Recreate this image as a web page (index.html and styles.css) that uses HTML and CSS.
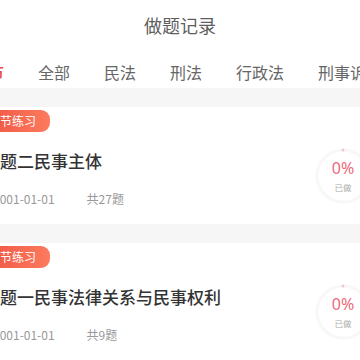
FILE: index.html
```html
<!DOCTYPE html>
<html lang="zh-CN">
<head>
<meta charset="utf-8">
<title>做题记录</title>
<link rel="stylesheet" href="styles.css">
</head>
<body>
<header class="topbar">做题记录</header>
<nav class="tabs">
  <span class="tab active">章节</span>
  <span class="tab">全部</span>
  <span class="tab">民法</span>
  <span class="tab">刑法</span>
  <span class="tab">行政法</span>
  <span class="tab">刑事诉讼法</span>
</nav>
<main class="list">
  <section class="card">
    <div class="info">
      <span class="badge">章节练习</span>
      <h2 class="title">专题二民事主体</h2>
      <p class="meta"><span>2001-01-01</span><span class="count">共27题</span></p>
    </div>
    <div class="progress">
      <svg class="ring" width="56" height="56" viewBox="0 0 56 56">
        <circle cx="28" cy="28" r="26" fill="none" stroke="#f8f8f8" stroke-width="3"/>
        <circle cx="28" cy="2" r="1.5" fill="#f7c6cc"/>
      </svg>
      <div class="pct"><span class="num">0%</span><span class="lbl">已做</span></div>
    </div>
  </section>
  <section class="card">
    <div class="info">
      <span class="badge">章节练习</span>
      <h2 class="title">专题一民事法律关系与民事权利</h2>
      <p class="meta"><span>2001-01-01</span><span class="count">共9题</span></p>
    </div>
    <div class="progress">
      <svg class="ring" width="56" height="56" viewBox="0 0 56 56">
        <circle cx="28" cy="28" r="26" fill="none" stroke="#f8f8f8" stroke-width="3"/>
        <circle cx="28" cy="2" r="1.5" fill="#f7c6cc"/>
      </svg>
      <div class="pct"><span class="num">0%</span><span class="lbl">已做</span></div>
    </div>
  </section>
</main>
</body>
</html>
```
FILE: styles.css
```css
* { box-sizing: border-box; }
html, body {
  margin: 0;
  padding: 0;
  width: 360px;
  height: 360px;
  overflow: hidden;
  background: #fff;
  font-family: "Noto Sans CJK SC", "Noto Sans", sans-serif;
}
.topbar {
  height: 50px;
  display: flex;
  align-items: center;
  justify-content: center;
  font-size: 18px;
  color: #5e5e5e;
}
.tabs {
  height: 38px;
  padding-top: 6px;
  display: flex;
  align-items: center;
  gap: 34px;
  margin-left: -28px;
  width: 420px;
  white-space: nowrap;
  font-size: 16px;
  color: #666;
}
.tab { line-height: 32px; flex: none; }
.tab.active { color: #e8483b; font-weight: 500; }
.list {
  width: 400px;
  margin-left: -26px;
  background: #f6f6f6;
  padding-top: 19px;
  display: flex;
  flex-direction: column;
  gap: 19px;
}
.card {
  background: #fff;
  height: 117px;
  display: flex;
  align-items: flex-start;
  padding-right: 3px;
}
.info { flex: 1; min-width: 0; }
.badge {
  display: inline-block;
  height: 22px;
  line-height: 22px;
  padding: 0 14px;
  font-size: 12px;
  color: #fff;
  background: linear-gradient(90deg, #ef4f3f, #fb7b5e);
  border-radius: 0 9px 9px 0;
}
.title {
  margin: 16px 0 0;
  padding-left: 9px;
  font-size: 17px;
  line-height: 25px;
  font-weight: 500;
  color: #333;
  white-space: nowrap;
}
.meta {
  margin: 17px 0 0;
  padding-left: 19px;
  font-size: 12px;
  line-height: 18px;
  color: #999;
}
.count { margin-left: 32px; }
.progress {
  position: relative;
  width: 56px;
  height: 56px;
  margin-top: 41px;
  flex: none;
}
.ring { display: block; }
.pct {
  position: absolute;
  inset: 0;
  display: flex;
  flex-direction: column;
  align-items: center;
  justify-content: center;
  gap: 4px;
}
.num {
  font-size: 16px;
  line-height: 18px;
  color: #ec6a7c;
  font-family: "Noto Sans", sans-serif;
}
.lbl {
  font-size: 8.5px;
  line-height: 12px;
  color: #aaa;
}
```
